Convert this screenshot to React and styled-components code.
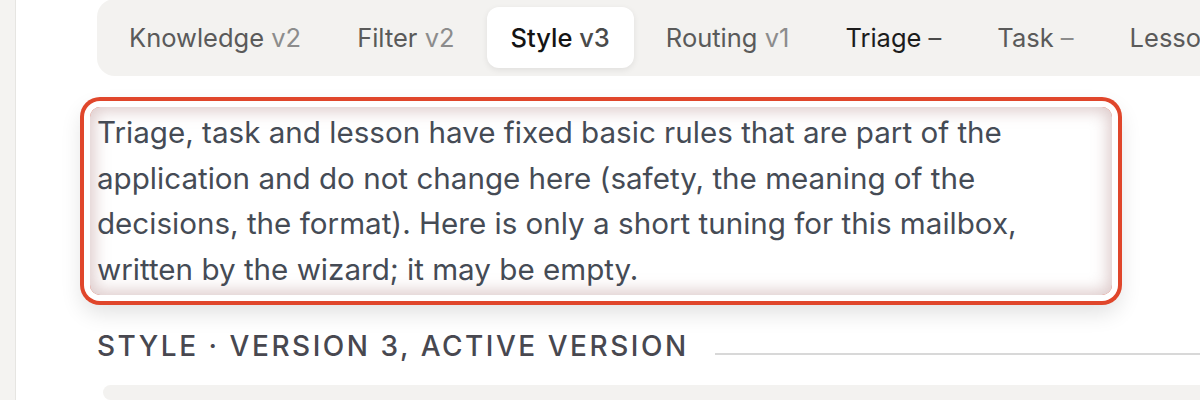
import React from 'react';
import styled, { createGlobalStyle } from 'styled-components';

const GlobalStyle = createGlobalStyle`
    html, body {
        margin: 0;
        padding: 0;
        background: #ffffff;
        overflow: hidden;
    }
    body {
        font-family: Inter, "Noto Sans", sans-serif;
    }
`;

const Page = styled.div`
    display: flex;
    height: 400px;
    width: 1200px;
    overflow: hidden;
`;

const SideStrip = styled.div`
    flex: 0 0 15px;
    background: #f4f3f1;
    border-right: 1px solid #e6e5e2;
`;

const Main = styled.div`
    flex: 0 0 1300px;
    padding-left: 81px;
    display: flex;
    flex-direction: column;
`;

const TabBar = styled.div`
    display: flex;
    gap: 8px;
    padding: 8px;
    background: #f3f2f0;
    border-radius: 18px 0 0 18px;
    margin-top: -1px;
`;

const Tab = styled.button`
    border: none;
    font-family: inherit;
    font-size: 25.5px;
    height: 61px;
    padding: 0 24px;
    border-radius: 12px;
    white-space: nowrap;
    cursor: pointer;
    background: ${p => (p.$active ? '#ffffff' : 'transparent')};
    box-shadow: ${p => (p.$active ? '0 2px 6px rgba(0, 0, 0, 0.08)' : 'none')};
    color: ${p => (p.$active ? '#141414' : p.$strong ? '#1c1c1c' : '#5a5a5a')};
    font-weight: ${p => (p.$active ? 500 : 400)};
`;

const Version = styled.span`
    color: ${p => (p.$active ? '#4a4a4a' : '#8c8c8c')};
`;

const EditorWrap = styled.div`
    margin-top: 31px;
    width: 1008px;
`;

// focus ring: white gap, red outline and a soft drop shadow around the textarea
const Editor = styled.div`
    margin: 0 -7px;
    padding: 3px 7px;
    border-radius: 10px;
    box-shadow:
        inset 0 0 16px 4px rgba(165, 115, 115, 0.38),
        0 0 0 6px #ffffff,
        0 0 0 10px #e0462b,
        0 10px 22px 8px rgba(0, 0, 0, 0.12);
    font-size: 29.6px;
    line-height: 45.5px;
    color: #454b55;
`;

const SectionHead = styled.div`
    display: flex;
    align-items: flex-end;
    gap: 26px;
    margin-top: 34px;
`;

const SectionTitle = styled.h3`
    margin: 0;
    font-size: 28px;
    line-height: 34px;
    font-weight: 500;
    letter-spacing: 0.09em;
    text-transform: uppercase;
    color: #484850;
    white-space: nowrap;
`;

const Rule = styled.div`
    flex: 1;
    height: 2px;
    background: #d8d8d8;
    margin-bottom: 8px;
`;

const NextCard = styled.div`
    margin-top: 22px;
    margin-left: 6px;
    height: 80px;
    background: #f3f2f0;
    border-radius: 18px;
`;

const tabs = [
    { name: 'Knowledge', version: 'v2' },
    { name: 'Filter', version: 'v2' },
    { name: 'Style', version: 'v3', active: true },
    { name: 'Routing', version: 'v1' },
    { name: 'Triage', version: '–', strong: true },
    { name: 'Task', version: '–' },
    { name: 'Lesson', version: '–' },
];

export default function App() {
    return (
        <>
            <GlobalStyle />
            <Page>
                <SideStrip />
                <Main>
                    <TabBar>
                        {tabs.map(t => (
                            <Tab key={t.name} $active={t.active} $strong={t.strong}>
                                {t.name} <Version $active={t.active || t.strong}>{t.version}</Version>
                            </Tab>
                        ))}
                    </TabBar>

                    <EditorWrap>
                        <Editor>
                            Triage, task and lesson have fixed basic rules that are part of the
                            application and do not change here (safety, the meaning of the
                            decisions, the format). Here is only a short tuning for this mailbox,
                            written by the wizard; it may be empty.
                        </Editor>
                    </EditorWrap>

                    <SectionHead>
                        <SectionTitle>Style · Version 3, active version</SectionTitle>
                        <Rule />
                    </SectionHead>

                    <NextCard />
                </Main>
            </Page>
        </>
    );
}
